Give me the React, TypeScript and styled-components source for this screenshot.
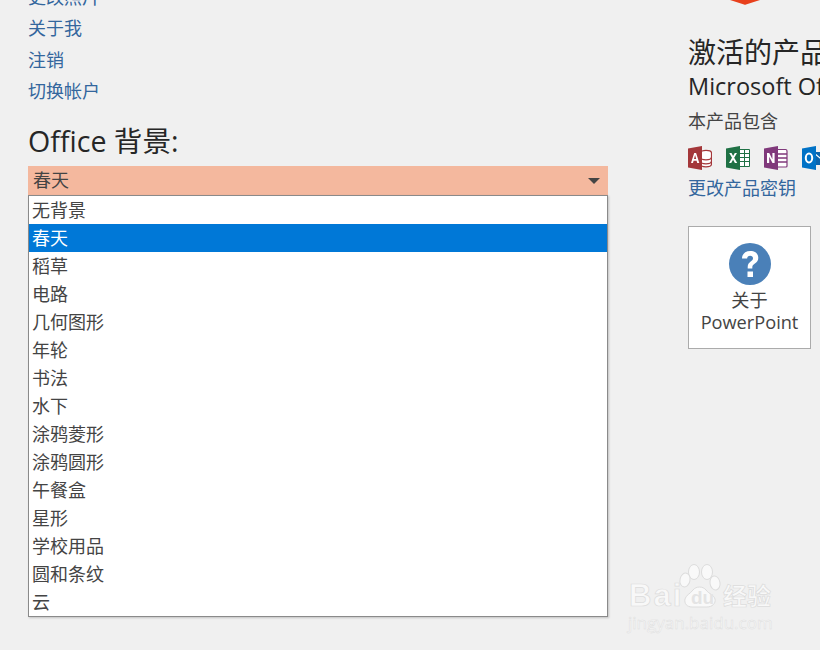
import React from "react";
import styled, { createGlobalStyle } from "styled-components";

const FONT = `"Open Sans", "Noto Sans CJK SC", sans-serif`;

const backgrounds = [
  "无背景",
  "春天",
  "稻草",
  "电路",
  "几何图形",
  "年轮",
  "书法",
  "水下",
  "涂鸦菱形",
  "涂鸦圆形",
  "午餐盒",
  "星形",
  "学校用品",
  "圆和条纹",
  "云",
];

const accountLinks = ["更改照片", "关于我", "注销", "切换帐户"];

const GlobalStyle = createGlobalStyle`
  html, body {
    margin: 0;
    padding: 0;
    height: 650px;
    overflow: hidden;
    background: #f0f0f0;
  }
`;

const Page = styled.div`
  position: relative;
  width: 820px;
  height: 650px;
  overflow: hidden;
  display: flex;
  gap: 80px;
  padding-left: 28px;
  box-sizing: border-box;
  background: #f0f0f0;
  font-family: ${FONT};
`;

const LeftColumn = styled.section`
  width: 580px;
  flex: none;
  display: flex;
  flex-direction: column;
`;

const RightColumn = styled.section`
  width: 132px;
  flex: none;
  display: flex;
  flex-direction: column;
  align-items: flex-start;
  white-space: nowrap;
`;

const LinkList = styled.div`
  margin-top: -18px;
  display: flex;
  flex-direction: column;
`;

const TextLink = styled.a`
  display: block;
  height: 31.3px;
  line-height: 31.3px;
  font-size: 18px;
  color: #33669d;
  white-space: nowrap;
`;

const SectionTitle = styled.h2`
  margin: 12px 0 0;
  height: 44px;
  line-height: 44px;
  font-size: 28.6px;
  font-weight: 400;
  color: #262626;
`;

const SelectBar = styled.div`
  margin-top: 3px;
  height: 29px;
  padding: 0 8px 3px 5px;
  box-sizing: border-box;
  display: flex;
  align-items: center;
  justify-content: space-between;
  background: #f4b89e;
  color: #444;
  font-size: 18px;
`;

const Caret = styled.span`
  width: 0;
  height: 0;
  margin-top: 3px;
  border-left: 6px solid transparent;
  border-right: 6px solid transparent;
  border-top: 6px solid #444;
`;

const Dropdown = styled.ul`
  margin: 0;
  padding: 0;
  list-style: none;
  background: #fff;
  border: 1px solid #8a8a8a;
  box-shadow: 1px 1px 2px rgba(0, 0, 0, 0.2);
`;

const Option = styled.li<{ $selected?: boolean }>`
  height: 28px;
  line-height: 28px;
  padding-left: 3px;
  font-size: 18px;
  background: ${(p) => (p.$selected ? "#0078d7" : "#fff")};
  color: ${(p) => (p.$selected ? "#fff" : "#444")};
`;

const OfficeMark = styled.svg`
  display: block;
  margin-left: 42px;
  width: 30px;
  height: 5px;
  flex: none;
`;

const ProductTitle = styled.h2`
  margin: 28px 0 0;
  height: 38px;
  line-height: 38px;
  font-size: 28px;
  font-weight: 400;
  color: #262626;
`;

const ProductName = styled.div`
  height: 30px;
  line-height: 30px;
  font-size: 23.5px;
  color: #262626;
`;

const IncludesLabel = styled.div`
  margin-top: 7px;
  height: 26px;
  line-height: 26px;
  font-size: 18px;
  color: #444;
`;

const AppIcons = styled.div`
  margin-top: 12px;
  display: flex;
  gap: 14px;
`;

const AppIcon = styled.svg`
  display: block;
  width: 24px;
  height: 24px;
  flex: none;
`;

const ChangeKey = styled(TextLink)`
  margin-top: 4px;
  height: 28px;
  line-height: 28px;
`;

const AboutButton = styled.button`
  margin-top: 24px;
  width: 123px;
  height: 123px;
  padding: 16px 0 0;
  box-sizing: border-box;
  display: flex;
  flex-direction: column;
  align-items: center;
  background: #fff;
  border: 1px solid #ababab;
  color: #444;
  font-family: ${FONT};
  font-size: 18.2px;
  line-height: 22px;
`;

const HelpIcon = styled.svg`
  display: block;
  width: 42px;
  height: 42px;
  margin-bottom: 4px;
  flex: none;
`;

const Watermark = styled.div`
  position: absolute;
  left: 628px;
  top: 560px;
  width: 150px;
  height: 74px;
  color: #f8f8f8;
`;

const WatermarkPaw = styled.svg`
  position: absolute;
  left: 0;
  top: 0;
  width: 150px;
  height: 50px;
`;

const WatermarkBrand = styled.span`
  position: absolute;
  left: 1px;
  top: 22px;
  font-family: "Liberation Sans", sans-serif;
  font-size: 31px;
  line-height: 28px;
  letter-spacing: 2px;
  font-weight: 700;
  -webkit-text-stroke: 0.7px #dcdcdc;
`;

const WatermarkDu = styled.span`
  position: absolute;
  left: 63px;
  top: 28px;
  font-family: "Liberation Sans", sans-serif;
  font-size: 19px;
  line-height: 20px;
  font-weight: 700;
  color: #e4e4e4;
`;

const WatermarkLabel = styled.span`
  position: absolute;
  left: 95px;
  top: 22px;
  font-size: 24px;
  line-height: 28px;
  font-weight: 700;
  -webkit-text-stroke: 0.7px #dcdcdc;
`;

const WatermarkUrl = styled.span`
  position: absolute;
  left: 0;
  top: 53px;
  font-size: 17px;
  line-height: 20px;
  white-space: nowrap;
  -webkit-text-stroke: 0.5px #dedede;
`;

const AccessIcon = () => (
  <AppIcon viewBox="0 0 24 24">
    <ellipse cx="18" cy="7" rx="5.500" ry="2.600" fill="#fff" stroke="#a4373a" strokeWidth="1.200" />
    <path d="M12.500 7v11c0 1.600 2.500 2.800 5.500 2.800s5.500-1.200 5.500-2.800V7" fill="#fff" stroke="#a4373a" strokeWidth="1.200" />
    <path d="M12.500 11c0 1.600 2.500 2.800 5.500 2.800s5.500-1.200 5.500-2.800M12.500 15c0 1.600 2.500 2.800 5.500 2.800s5.500-1.200 5.500-2.800" fill="none" stroke="#a4373a" strokeWidth="1.200" />
    <path d="M0 2.500 14 0v24L0 21.500z" fill="#a4373a" />
    <path d="M3 17 6.200 7h1.900l3.200 10H9.200l-.6-2.300H5.600L5 17zM6 13h2.200L7.100 9z" fill="#fff" />
  </AppIcon>
);

const ExcelIcon = () => (
  <AppIcon viewBox="0 0 24 24">
    <path d="M13 3.500h10.500v17H13z" fill="#fff" stroke="#1f7145" />
    <path d="M13 7.500h11M13 11.500h11M13 15.500h11M18.500 3.500v17" stroke="#1f7145" strokeWidth="1" fill="none" />
    <path d="M0 2.500 14 0v24L0 21.500z" fill="#1f7145" />
    <path d="m3 17 3-5.200L3.200 7h2.300l1.600 3.100L8.800 7h2.200l-2.800 4.800 3 5.200H8.900l-1.800-3.300L5.200 17z" fill="#fff" />
  </AppIcon>
);

const OneNoteIcon = () => (
  <AppIcon viewBox="0 0 24 24">
    <path d="M13 3.500h8.500a1.500 1.500 0 0 1 1.500 1.500v15a1 1 0 0 1-1 1h-9z" fill="#fff" stroke="#80397b" strokeWidth="1.200" />
    <path d="M14 8h9M14 12h9M14 16h9" stroke="#80397b" strokeWidth="1.600" fill="none" />
    <path d="M0 2.500 14 0v24L0 21.500z" fill="#80397b" />
    <path d="M3 17V7h2.200l3.200 6.200V7h2.200v10H8.500L5.200 10.700V17z" fill="#fff" />
  </AppIcon>
);

const OutlookIcon = () => (
  <AppIcon viewBox="0 0 24 24">
    <path d="M12 6h12v13H12z" fill="#0a64ad" />
    <path d="m12 7 6 5 6-5" stroke="#fff" strokeWidth="1.200" fill="none" />
    <path d="M0 2.500 14 0v24L0 21.500z" fill="#0072c6" />
    <ellipse cx="7" cy="12" rx="3.200" ry="4.400" fill="none" stroke="#fff" strokeWidth="2" />
  </AppIcon>
);

const App = () => {
  return (
    <Page>
      <GlobalStyle />
      <LeftColumn>
        <LinkList>
          {accountLinks.map((label) => (
            <TextLink key={label}>{label}</TextLink>
          ))}
        </LinkList>
        <SectionTitle>Office 背景:</SectionTitle>
        <SelectBar>
          春天
          <Caret />
        </SelectBar>
        <Dropdown>
          {backgrounds.map((name) => (
            <Option key={name} $selected={name === "春天"}>
              {name}
            </Option>
          ))}
        </Dropdown>
      </LeftColumn>
      <RightColumn>
        <OfficeMark viewBox="0 0 30 5">
          <path d="M0 0h30L16 4.500a3 3 0 0 1-2 0z" fill="#e8401c" />
        </OfficeMark>
        <ProductTitle>激活的产品</ProductTitle>
        <ProductName>Microsoft Office</ProductName>
        <IncludesLabel>本产品包含</IncludesLabel>
        <AppIcons>
          <AccessIcon />
          <ExcelIcon />
          <OneNoteIcon />
          <OutlookIcon />
        </AppIcons>
        <ChangeKey>更改产品密钥</ChangeKey>
        <AboutButton>
          <HelpIcon viewBox="0 0 42 42">
            <circle cx="21" cy="21" r="21" fill="#4a80b8" />
            <path
              d="M13 15.500c0-4.500 3.400-7.500 8.300-7.500 4.800 0 8 2.700 8 6.700 0 2.800-1.500 4.400-3.400 5.800-1.900 1.400-2.600 2.200-2.600 4v1H18.700v-1.400c0-2.800 1-4.200 3-5.700 1.500-1.100 2.300-1.900 2.300-3.200 0-1.500-1.100-2.500-2.800-2.500-1.900 0-3 1.200-3.100 2.800z"
              fill="#fff"
            />
            <rect x="18.500" y="28.500" width="5.500" height="5.500" fill="#fff" />
          </HelpIcon>
          <span>关于</span>
          <span>PowerPoint</span>
        </AboutButton>
      </RightColumn>
      <Watermark>
        <WatermarkBrand>Bai</WatermarkBrand>
        <WatermarkPaw viewBox="0 0 150 50">
          <g fill="#f9f9f9" stroke="#dcdcdc" strokeWidth="1">
            <ellipse cx="66" cy="12" rx="5.500" ry="7.500" />
            <ellipse cx="79" cy="12" rx="5.500" ry="7.500" />
            <ellipse cx="87" cy="23" rx="5" ry="7" transform="rotate(-10 87 23)" />
            <ellipse cx="57" cy="20" rx="5" ry="7" transform="rotate(12 57 20)" />
            <path d="M64 47c-5 0-8-3.500-7-8 1-4 5-5 8-9 3-4 10-4 13 0 3 4 8 5 9 9 1 4.500-3 8-8 8z" />
          </g>
        </WatermarkPaw>
        <WatermarkDu>du</WatermarkDu>
        <WatermarkLabel>经验</WatermarkLabel>
        <WatermarkUrl>jingyan.baidu.com</WatermarkUrl>
      </Watermark>
    </Page>
  );
};

export default App;
